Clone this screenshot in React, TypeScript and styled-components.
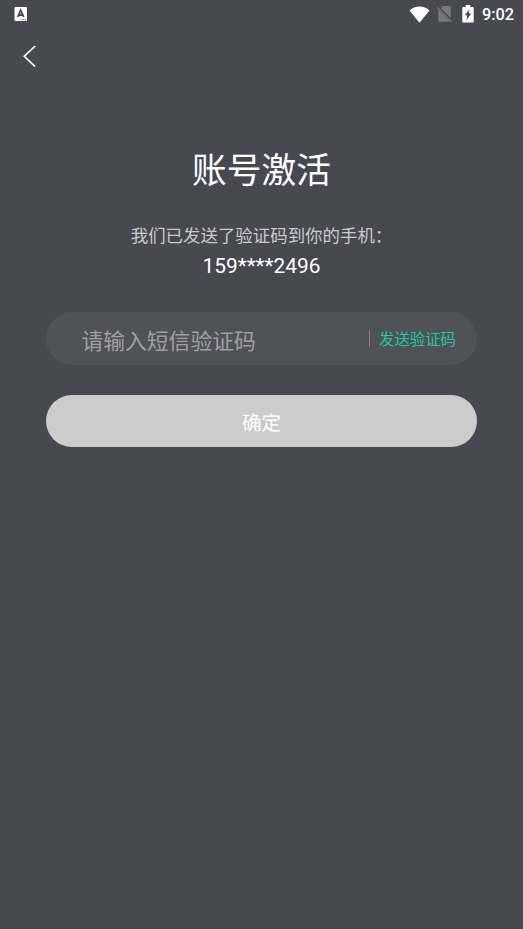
import React, { useState } from "react";
import styled, { createGlobalStyle } from "styled-components";

const GlobalStyle = createGlobalStyle`
  * { box-sizing: border-box; }
  body { margin: 0; background: #484851; }
`;

const Screen = styled.div`
  display: flex;
  flex-direction: column;
  width: 100%;
  min-height: 100vh;
  background: #484851;
  color: #fff;
  font-family: Roboto, "Noto Sans CJK SC", sans-serif;
`;

const StatusBar = styled.header`
  display: flex;
  justify-content: space-between;
  align-items: center;
  height: 28px;
  padding: 0 9px 0 14px;
  svg { display: block; }
`;

const StatusIcons = styled.div`
  display: flex;
  align-items: center;
`;

const Clock = styled.time`
  margin-left: 8px;
  padding-top: 1px;
  width: 32px;
  font-size: 16.3px;
  line-height: 20px;
  font-weight: 500;
  white-space: nowrap;
`;

const NavBar = styled.nav`
  display: flex;
  align-items: center;
  height: 56px;
  padding-left: 21px;
`;

const BackButton = styled.button`
  padding: 0;
  border: 0;
  background: none;
  svg { display: block; }
`;

const Content = styled.main`
  display: flex;
  flex-direction: column;
  padding: 61px 46.4px 0;
`;

const Title = styled.h1`
  margin: 0;
  font-size: 34.7px;
  line-height: 52px;
  font-weight: 400;
  text-align: center;
`;

const Hint = styled.p`
  margin: 26px 0 0;
  color: #c9c9c9;
  font-size: 17.45px;
  line-height: 26px;
  text-align: center;
  white-space: nowrap;
`;

const Phone = styled.p`
  margin: 3px 0 0;
  font-size: 20.9px;
  line-height: 28px;
  text-align: center;
`;

const Field = styled.div`
  display: flex;
  align-items: center;
  height: 53px;
  margin-top: 32px;
  padding: 0 20.6px 0 35px;
  border-radius: 27px;
  background: #515158;
`;

const CodeInput = styled.input`
  flex: 1;
  min-width: 0;
  height: 40px;
  margin-top: 5px;
  padding: 0;
  border: 0;
  outline: 0;
  background: none;
  color: #fff;
  font-family: inherit;
  font-size: 21.8px;
  &::placeholder { color: #9f9fa2; opacity: 1; }
`;

const Divider = styled.span`
  width: 1px;
  height: 17px;
  margin-right: 9px;
  background: #828284;
`;

const SendButton = styled.button`
  padding: 2px 0 0;
  border: 0;
  background: none;
  color: #19c9a7;
  font-family: inherit;
  font-size: 15.4px;
  line-height: 24px;
  white-space: nowrap;
`;

const SubmitButton = styled.button`
  height: 52px;
  margin-top: 30px;
  padding: 1px 0 0;
  border: 0;
  border-radius: 26px;
  background: #ccc;
  color: #fff;
  font-family: inherit;
  font-size: 19.6px;
`;

const WifiIcon = () => (
  <svg width="21" height="17" viewBox="0 0 21 17">
    <path d="M.5 4.500C6-.9 15-.9 20.500 4.500L10.500 16.800Z" fill="#fff" />
  </svg>
);

const NoSimIcon = () => (
  <svg width="17" height="18" viewBox="0 0 17 18">
    <path d="M7.200 1H13.500a1.300 1.300 0 0 1 1.300 1.300V13.200L4.800 3.200ZM2.300 4.900 14 16.700H3.600a1.300 1.300 0 0 1-1.300-1.300Z" fill="#77777d" />
    <path d="M1.200 2.400 15.500 16.800" stroke="#85858a" strokeWidth="1.100" />
    <path d="M2.200 1.600 16.300 15.800" stroke="#484851" strokeWidth="1.100" />
  </svg>
);

const BatteryIcon = () => (
  <svg width="12" height="18" viewBox="0 0 12 18">
    <path d="M3.700 0h4.600v2H10.700a1 1 0 0 1 1 1v13.500a1 1 0 0 1-1 1H1.300a1 1 0 0 1-1-1V3a1 1 0 0 1 1-1h2.400Z" fill="#fff" />
    <path d="M7.600 4.300 2.700 10.300h2.500L4.400 15.200 9.300 8.500H6.800Z" fill="#484851" />
  </svg>
);

const KeyboardIcon = () => (
  <svg width="13" height="14" viewBox="0 0 13 14">
    <rect x="0.500" width="12.500" height="14" rx="1" fill="#fff" />
    <path d="M3.700 10 6.700 3.200 9.700 10M4.800 8h3.900" fill="none" stroke="#484851" strokeWidth="1.800" />
    <path d="M6.500 12.700h1M8.500 12.700h1.300M10.800 12.700h1.200" stroke="#77777d" strokeWidth="1.200" />
  </svg>
);

const Gap = styled.span<{ $size: number }>`
  width: ${({ $size }) => $size}px;
`;

export default function App() {
  const [code, setCode] = useState("");
  return (
    <Screen>
      <GlobalStyle />
      <StatusBar>
        <KeyboardIcon />
        <StatusIcons>
          <WifiIcon />
          <Gap $size={6} />
          <NoSimIcon />
          <Gap $size={9} />
          <BatteryIcon />
          <Clock>9:02</Clock>
        </StatusIcons>
      </StatusBar>
      <NavBar>
        <BackButton aria-label="返回">
          <svg width="16" height="24" viewBox="0 0 16 24">
            <path d="M14.200 2 3.200 12.300 14.200 22.700" fill="none" stroke="#fff" strokeWidth="1.600" />
          </svg>
        </BackButton>
      </NavBar>
      <Content>
        <Title>账号激活</Title>
        <Hint>我们已发送了验证码到你的手机：</Hint>
        <Phone>159****2496</Phone>
        <Field>
          <CodeInput value={code} onChange={(e) => setCode(e.target.value)} placeholder="请输入短信验证码" />
          <Divider />
          <SendButton>发送验证码</SendButton>
        </Field>
        <SubmitButton>确定</SubmitButton>
      </Content>
    </Screen>
  );
}
